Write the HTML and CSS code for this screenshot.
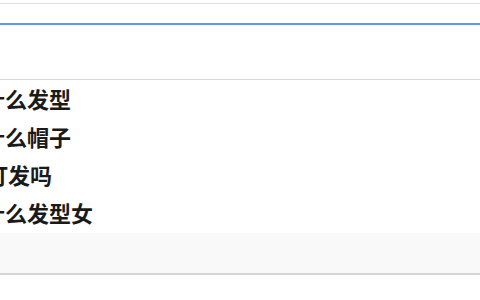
FILE: index.html
```html
<!DOCTYPE html>
<html lang="zh-CN">
<head>
<meta charset="utf-8">
<link rel="stylesheet" href="styles.css">
</head>
<body>
<div class="search">
  <div class="input"></div>
  <div class="suggest">
    <ul class="list">
      <li class="item">圆脸适合什么发型</li>
      <li class="item">圆脸适合什么帽子</li>
      <li class="item shift">圆脸可以打发吗</li>
      <li class="item">圆脸适合什么发型女</li>
    </ul>
    <div class="footer"></div>
  </div>
</div>
</body>
</html>
```
FILE: styles.css
```css
html, body {
  margin: 0;
  padding: 0;
  background: #ffffff;
}
body {
  padding-top: 3px;
  overflow: hidden;
  font-family: "Noto Sans CJK SC", "Noto Sans", sans-serif;
}
.search {
  width: 480px;
}
.input {
  height: 19px;
  border-top: 1px solid #e0e0e4;
  border-bottom: 2px solid #5a9af6;
}
.suggest {
  margin-top: 54px;
  border-top: 1px solid #d9d9d9;
  border-bottom: 2px solid #d6d6d6;
  box-shadow: 0 2px 6px rgba(0, 0, 0, 0.06);
}
.list {
  list-style: none;
  margin: 0 0 0 -105px;
  padding: 0 0 1px 0;
}
.item {
  height: 38px;
  line-height: 37px;
  font-size: 22px;
  font-weight: 700;
  color: #1a1a1a;
  white-space: nowrap;
}
.item.shift {
  padding-left: 3px;
}
.footer {
  height: 40px;
  background: #f9f9f9;
}
```
